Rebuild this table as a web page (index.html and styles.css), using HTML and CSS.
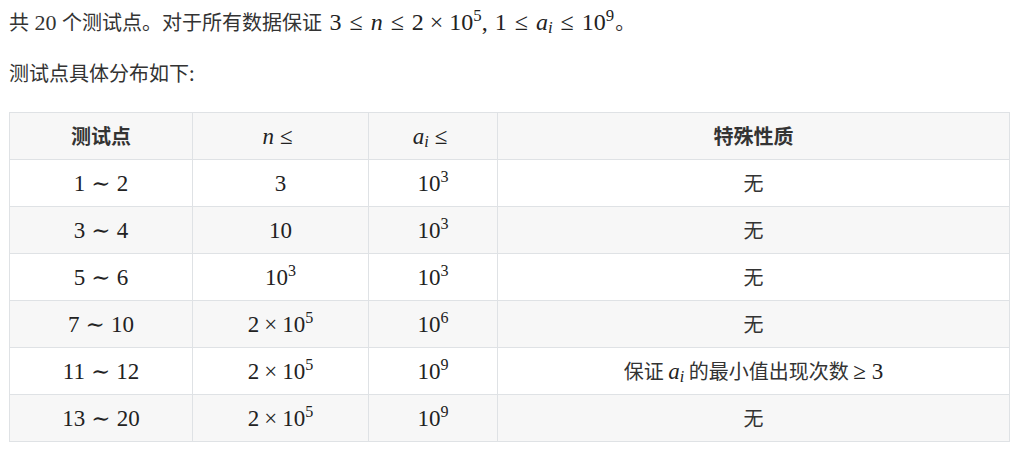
FILE: index.html
```html
<!DOCTYPE html>
<html lang="zh">
<head>
<meta charset="utf-8">
<link rel="stylesheet" href="styles.css">
</head>
<body>
<div class="page">
  <p class="para">共 <span class="num">20</span> 个测试点。对于所有数据保证 <span class="m big">3<span class="rel">≤</span><i>n</i><span class="rel">≤</span>2<span class="bin">×</span>10<sup>5</sup><span class="comma">,</span>1<span class="rel">≤</span><i>a<sub>i</sub></i><span class="rel">≤</span>10<sup>9</sup></span>。</p>
  <p class="para">测试点具体分布如下:</p>
  <table class="tbl">
    <colgroup>
      <col class="c1"><col class="c2"><col class="c3"><col class="c4">
    </colgroup>
    <thead>
      <tr>
        <th>测试点</th>
        <th class="mh"><span class="m"><i>n</i><span class="rel">≤</span></span></th>
        <th class="mh"><span class="m"><i>a<sub>i</sub></i><span class="rel">≤</span></span></th>
        <th>特殊性质</th>
      </tr>
    </thead>
    <tbody>
      <tr><td><span class="m">1<span class="rel">∼</span>2</span></td><td><span class="m">3</span></td><td><span class="m">10<sup>3</sup></span></td><td>无</td></tr>
      <tr><td><span class="m">3<span class="rel">∼</span>4</span></td><td><span class="m">10</span></td><td><span class="m">10<sup>3</sup></span></td><td>无</td></tr>
      <tr><td><span class="m">5<span class="rel">∼</span>6</span></td><td><span class="m">10<sup>3</sup></span></td><td><span class="m">10<sup>3</sup></span></td><td>无</td></tr>
      <tr><td><span class="m">7<span class="rel">∼</span>10</span></td><td><span class="m">2<span class="bin">×</span>10<sup>5</sup></span></td><td><span class="m">10<sup>6</sup></span></td><td>无</td></tr>
      <tr><td><span class="m">11<span class="rel">∼</span>12</span></td><td><span class="m">2<span class="bin">×</span>10<sup>5</sup></span></td><td><span class="m">10<sup>9</sup></span></td><td>保证 <span class="m"><i>a<sub>i</sub></i></span> 的最小值出现次数 <span class="m"><span class="rel first">≥</span>3</span></td></tr>
      <tr><td><span class="m">13<span class="rel">∼</span>20</span></td><td><span class="m">2<span class="bin">×</span>10<sup>5</sup></span></td><td><span class="m">10<sup>9</sup></span></td><td>无</td></tr>
    </tbody>
  </table>
</div>
</body>
</html>
```

FILE: styles.css
```css
html, body {
  margin: 0;
  padding: 0;
  background: #fff;
}
body {
  font-family: "Noto Sans CJK SC", sans-serif;
  font-size: 20px;
  color: #333;
}
.page {
  padding: 7px 22px 0 9px;
}
.para {
  margin: 0 0 20px 0;
  line-height: 30px;
}
.para + .para {
  margin-bottom: 24px;
}
.num {
  font-family: "Liberation Serif", serif;
  font-size: 22px;
  margin: 0 1px;
}
.m {
  font-family: "Liberation Serif", "DejaVu Serif", serif;
  font-size: 23px;
  color: #222;
  white-space: nowrap;
}
.m.big {
  font-size: 24px;
  margin: 0 1px 0 3px;
}
.m i {
  font-style: italic;
}
.m .rel {
  margin: 0 6px;
}
.m.big .rel {
  margin: 0 8px;
}
.m .rel.first {
  margin-left: 0;
}
.m .bin {
  margin: 0 5px;
}
.m.big .bin {
  margin: 0 6px;
}
.m .comma {
  margin-right: 7px;
}
.m sup {
  font-size: 0.7em;
  vertical-align: 0.55em;
  line-height: 0;
}
.m sub {
  font-size: 0.7em;
  vertical-align: -0.2em;
  line-height: 0;
  font-style: italic;
}
.tbl {
  border-collapse: collapse;
  width: 1000px;
  table-layout: fixed;
}
.c1 { width: 183px; }
.c2 { width: 176px; }
.c3 { width: 129px; }
.c4 { width: 512px; }
.tbl th, .tbl td {
  border: 1px solid #dfe2e5;
  text-align: center;
  height: 47px;
  padding: 0 8px;
  line-height: 28px;
  box-sizing: border-box;
}
.tbl th {
  background: #f7f7f7;
  font-weight: 700;
  color: #333;
}
.tbl th.mh {
  font-weight: 400;
}
.tbl td {
  color: #333;
}
.tbl tbody tr:nth-child(even) td {
  background: #f7f7f7;
}
.tbl tbody tr:nth-child(odd) td {
  background: #fff;
}
```
